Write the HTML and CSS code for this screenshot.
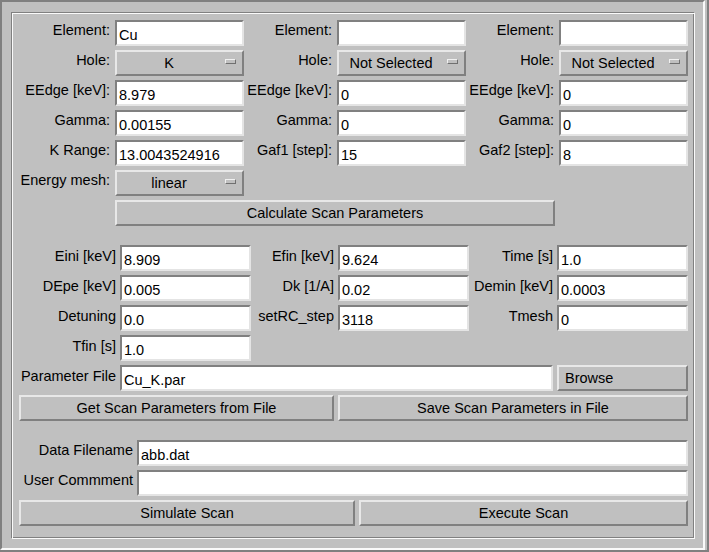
FILE: index.html
```html
<!DOCTYPE html>
<html>
<head>
<meta charset="utf-8">
<title>Scan</title>
<link rel="stylesheet" href="styles.css">
</head>
<body>
<div class="screen">
  <div class="win">
    <div class="groove">
      <div class="g1">
        <div class="lbl">Element:</div><div class="entry">Cu</div>
        <div class="lbl">Element:</div><div class="entry"></div>
        <div class="lbl">Element:</div><div class="entry"></div>

        <div class="lbl">Hole:</div><div class="mb"><span class="mbt">K</span><span class="ind"></span></div>
        <div class="lbl">Hole:</div><div class="mb"><span class="mbt">Not Selected</span><span class="ind"></span></div>
        <div class="lbl">Hole:</div><div class="mb"><span class="mbt">Not Selected</span><span class="ind"></span></div>

        <div class="lbl">EEdge [keV]:</div><div class="entry">8.979</div>
        <div class="lbl">EEdge [keV]:</div><div class="entry">0</div>
        <div class="lbl">EEdge [keV]:</div><div class="entry">0</div>

        <div class="lbl">Gamma:</div><div class="entry">0.00155</div>
        <div class="lbl">Gamma:</div><div class="entry">0</div>
        <div class="lbl">Gamma:</div><div class="entry">0</div>

        <div class="lbl">K Range:</div><div class="entry">13.0043524916</div>
        <div class="lbl">Gaf1 [step]:</div><div class="entry">15</div>
        <div class="lbl">Gaf2 [step]:</div><div class="entry">8</div>

        <div class="lbl">Energy mesh:</div><div class="mb"><span class="mbt">linear</span><span class="ind"></span></div>
        <div class="btn calc">Calculate Scan Parameters</div>
      </div>

      <div class="g2">
        <div class="lbl">Eini [keV]</div><div class="entry">8.909</div>
        <div class="lbl">Efin [keV]</div><div class="entry">9.624</div>
        <div class="lbl">Time [s]</div><div class="entry">1.0</div>

        <div class="lbl">DEpe [keV]</div><div class="entry">0.005</div>
        <div class="lbl">Dk [1/A]</div><div class="entry">0.02</div>
        <div class="lbl">Demin [keV]</div><div class="entry">0.0003</div>

        <div class="lbl">Detuning</div><div class="entry">0.0</div>
        <div class="lbl">setRC_step</div><div class="entry">3118</div>
        <div class="lbl">Tmesh</div><div class="entry">0</div>

        <div class="lbl">Tfin [s]</div><div class="entry">1.0</div>

        <div class="lbl first">Parameter File</div><div class="entry wide">Cu_K.par</div>
        <div class="btn browse">Browse</div>

        <div class="btn getb">Get Scan Parameters from File</div>
        <div class="btn saveb">Save Scan Parameters in File</div>
      </div>

      <div class="g3">
        <div class="lbl">Data Filename</div><div class="entry">abb.dat</div>
        <div class="lbl">User Commment</div><div class="entry"></div>
        <div class="btnrow">
          <div class="btn sim">Simulate Scan</div>
          <div class="btn exe">Execute Scan</div>
        </div>
      </div>
    </div>
  </div>
</div>
</body>
</html>
```

FILE: styles.css
```css
* {
  box-sizing: border-box;
  margin: 0;
  padding: 0;
}

html, body {
  width: 709px;
  height: 552px;
  overflow: hidden;
  background: #c0c0c0;
}

body {
  font-family: "Liberation Sans", Arial, sans-serif;
  font-size: 14.5px;
  color: #000;
}

.screen {
  width: 709px;
  height: 552px;
  border-right: 2px solid #808080;
  border-bottom: 2px solid #808080;
}

.win {
  width: 705px;
  height: 550px;
  border: 2px solid;
  border-color: #808080 #fafafa #fafafa #808080;
  padding: 10px 0 0 9px;
}

.groove {
  width: 684px;
  height: 527px;
  border: 1px solid;
  border-color: #808080 #fafafa #fafafa #808080;
  box-shadow: inset 1px 1px 0 #fafafa, inset -1px -1px 0 #808080;
  padding: 7px 6px 0 7px;
}

.g1 {
  display: grid;
  grid-template-columns: 96px 129px 93px 129px 93px 129px;
  grid-auto-rows: 26px;
  row-gap: 4px;
}

.g2 {
  margin-top: 19px;
  display: grid;
  grid-template-columns: 101px 131px 87px 131px 88px 131px;
  grid-auto-rows: 26px;
  row-gap: 4px;
}

.g3 {
  margin-top: 19px;
  display: grid;
  grid-template-columns: 118px 551px;
  grid-auto-rows: 26px;
  row-gap: 4px;
}

.lbl {
  text-align: right;
  white-space: nowrap;
  line-height: 17px;
  padding-right: 5px;
  padding-top: 2px;
}

.g2 .lbl,
.g3 .lbl {
  padding-right: 4px;
  padding-top: 3px;
}

.g3 .lbl {
  padding-top: 2px;
}

.g2 .first {
  grid-column: 1;
}

.entry {
  background: #fff;
  border: 2px solid;
  border-color: #808080 #e4e4e4 #e4e4e4 #808080;
  padding: 5px 2px 0;
  line-height: 17px;
  white-space: nowrap;
  overflow: hidden;
}

.entry.wide {
  grid-column: 2 / 6;
  margin-right: 4px;
}

.btn,
.mb {
  border: 2px solid;
  border-color: #e8e8e8 #808080 #808080 #e8e8e8;
  display: flex;
  align-items: center;
  justify-content: center;
  line-height: 17px;
  white-space: nowrap;
}

.mb {
  justify-content: flex-start;
  padding-right: 6px;
}

.mbt {
  flex: 1;
  text-align: center;
}

.ind {
  width: 11px;
  height: 5px;
  margin-left: 4px;
  margin-bottom: 3px;
  border: 1px solid;
  border-color: #f0f0f0 #707070 #707070 #f0f0f0;
}

.calc {
  grid-column: 2 / 6;
  margin-right: 4px;
}

.browse {
  justify-content: flex-start;
  padding-left: 6px;
}

.getb {
  grid-column: 1 / 4;
  margin-right: 4px;
}

.saveb {
  grid-column: 4 / 7;
}

.btnrow {
  grid-column: 1 / -1;
  display: flex;
  gap: 4px;
}

.sim {
  width: 336px;
}

.exe {
  flex: 1;
}
```
